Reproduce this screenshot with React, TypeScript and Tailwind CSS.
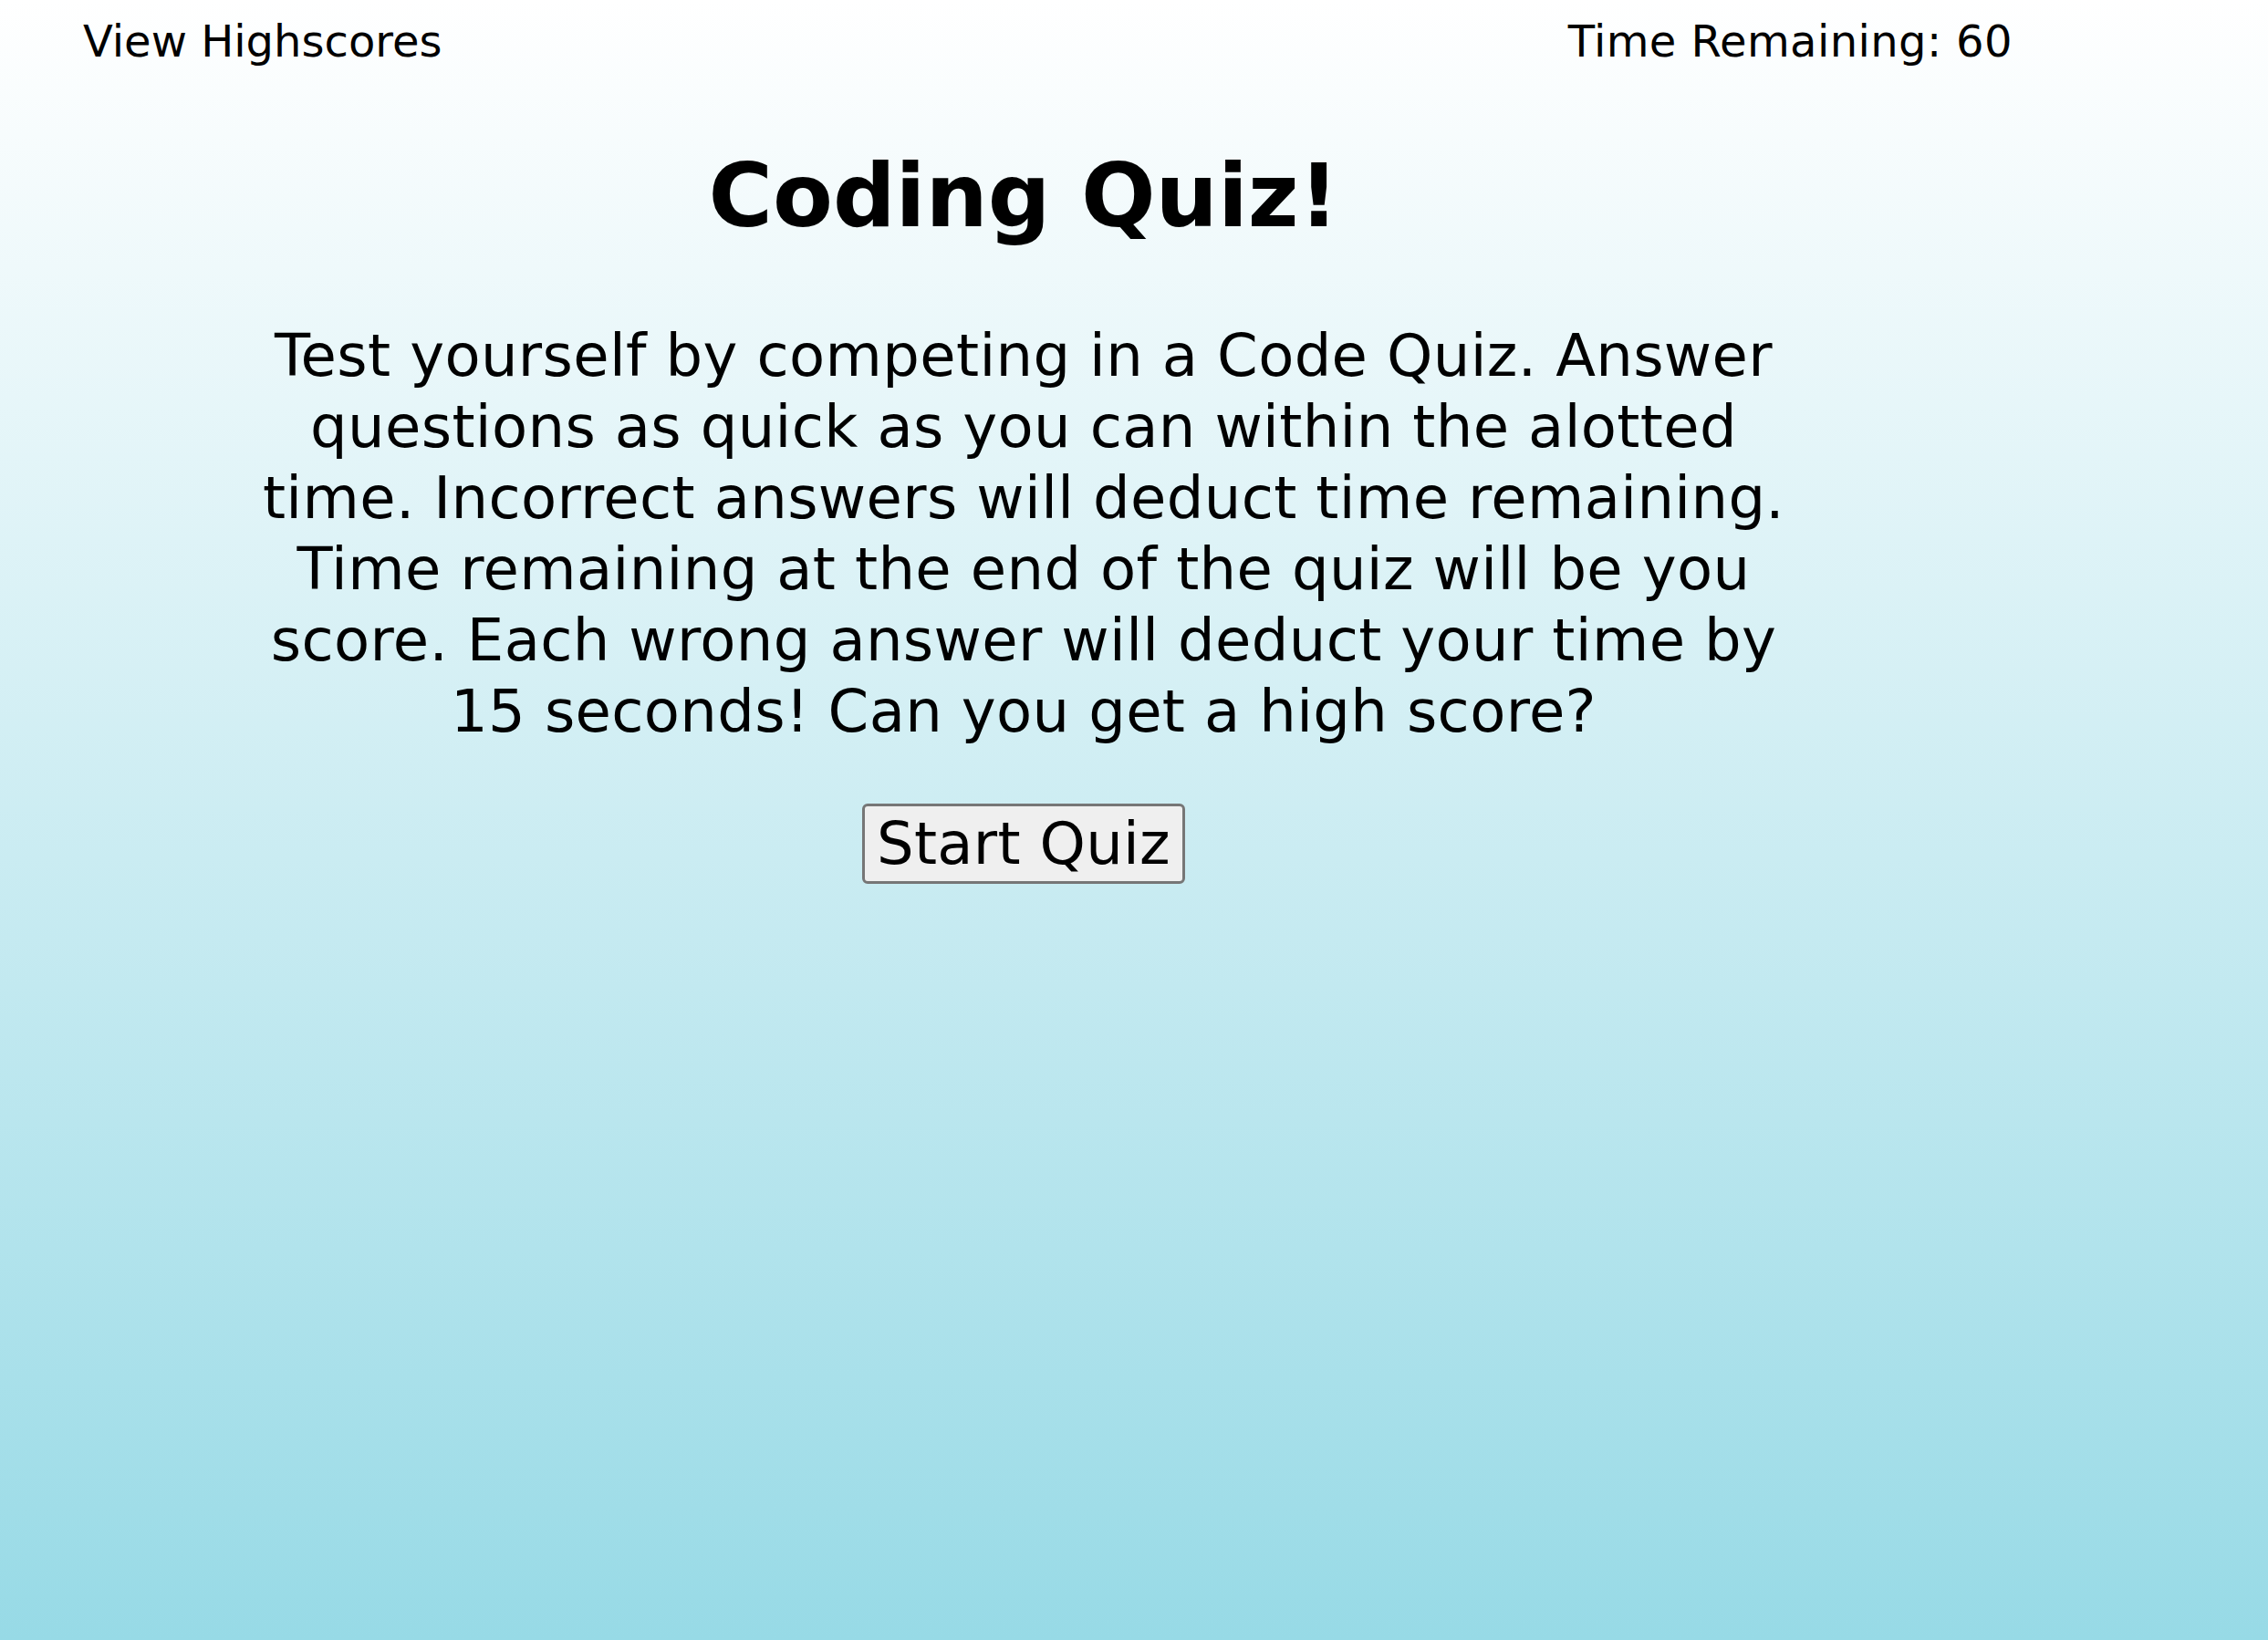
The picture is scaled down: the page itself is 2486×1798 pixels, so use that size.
export default function App() {
  return (
    <div className="min-h-[1798px] bg-gradient-to-b from-white to-[#97dae6] font-['DejaVu_Sans','Verdana',sans-serif] text-black">
      <header className="flex pt-[16px] text-[48px] leading-[58px]">
        <a href="#" className="ml-[91px]">
          View Highscores
        </a>
        <p className="ml-auto mr-[280px] tracking-[0.4px]">Time Remaining: 60</p>
      </header>

      <main className="ml-[277px] flex w-[1690px] flex-col items-center">
        <h1 className="mt-[83px] text-[96px] font-bold leading-[116px]">
          Coding Quiz!
        </h1>
        <p className="mt-[78px] text-center text-[64px] leading-[78px] tracking-[0.35px]">
          Test yourself by competing in a Code Quiz. Answer questions as quick
          as you can within the alotted time. Incorrect answers will deduct time
          remaining. Time remaining at the end of the quiz will be you score.
          Each wrong answer will deduct your time by 15 seconds! Can you get a
          high score?
        </p>
        <button className="mt-[62px] flex h-[88px] w-[354px] items-center justify-center rounded-[6px] border-[3px] border-[#767676] bg-[#efefef] text-[64px] leading-[74px] tracking-[0.3px]">
          Start Quiz
        </button>
      </main>
    </div>
  );
}
